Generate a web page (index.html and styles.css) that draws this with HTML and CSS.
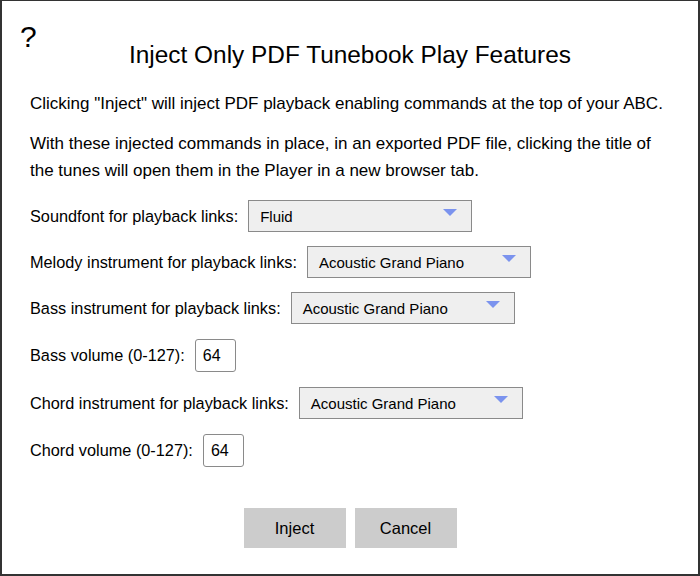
FILE: index.html
```html
<!DOCTYPE html>
<html>
<head>
<meta charset="utf-8">
<link rel="stylesheet" href="styles.css">
</head>
<body>
<div class="dialog">
  <a class="help">?</a>
  <h1 class="title">Inject Only PDF Tunebook Play Features</h1>
  <p class="text first">Clicking "Inject" will inject PDF playback enabling commands at the top of your ABC.</p>
  <p class="text">With these injected commands in place, in an exported PDF file, clicking the title of the tunes will open them in the Player in a new browser tab.</p>
  <div class="rows">
    <div class="row">
      <span class="label">Soundfont for playback links:</span>
      <div class="select"><span>Fluid</span><i class="arrow"></i></div>
    </div>
    <div class="row">
      <span class="label">Melody instrument for playback links:</span>
      <div class="select"><span>Acoustic Grand Piano</span><i class="arrow"></i></div>
    </div>
    <div class="row">
      <span class="label">Bass instrument for playback links:</span>
      <div class="select"><span>Acoustic Grand Piano</span><i class="arrow"></i></div>
    </div>
    <div class="row num-row">
      <span class="label">Bass volume (0-127):</span>
      <div class="num">64</div>
    </div>
    <div class="row">
      <span class="label">Chord instrument for playback links:</span>
      <div class="select"><span>Acoustic Grand Piano</span><i class="arrow"></i></div>
    </div>
    <div class="row num-row">
      <span class="label">Chord volume (0-127):</span>
      <div class="num">64</div>
    </div>
  </div>
  <div class="buttons">
    <button class="btn">Inject</button>
    <button class="btn">Cancel</button>
  </div>
</div>
</body>
</html>
```
FILE: styles.css
```css
html, body {
  margin: 0;
  padding: 0;
  background: #fff;
}
.dialog {
  position: relative;
  box-sizing: border-box;
  width: 700px;
  height: 576px;
  border: 2px solid #333;
  border-top-width: 1px;
  padding: 0 28px 0 28px;
  font-family: "Liberation Sans", Arial, sans-serif;
  color: #000;
}
.help {
  position: absolute;
  left: 18px;
  top: 19px;
  font-size: 30px;
  line-height: 34px;
}
.title {
  margin: 39px 0 0;
  font-size: 24.4px;
  font-weight: normal;
  line-height: 30px;
  text-align: center;
}
.text {
  margin: 0;
  font-size: 17px;
  line-height: 27px;
}
.text.first {
  margin-top: 20px;
  margin-bottom: 13px;
}
.rows {
  margin-top: 16px;
  display: flex;
  flex-direction: column;
  gap: 14px;
}
.row {
  display: flex;
  align-items: center;
  gap: 10px;
  font-size: 16.3px;
  height: 32px;
}
.row.num-row {
  height: 35px;
}
.select {
  position: relative;
  box-sizing: border-box;
  width: 224px;
  height: 32px;
  background: #efefef;
  border: 1px solid #8a8a8a;
  padding-left: 11px;
  display: flex;
  align-items: center;
  font-size: 15px;
}
.arrow {
  position: absolute;
  right: 14px;
  top: 8px;
  width: 0;
  height: 0;
  border-left: 7px solid transparent;
  border-right: 7px solid transparent;
  border-top: 7px solid #7b93ee;
}
.num {
  box-sizing: border-box;
  width: 41px;
  height: 33px;
  border: 1px solid #8a8a8a;
  border-radius: 3px;
  padding-left: 7px;
  display: flex;
  align-items: center;
  font-size: 16px;
}
.buttons {
  display: flex;
  justify-content: center;
  gap: 9px;
  margin-top: 40px;
}
.btn {
  width: 102px;
  height: 40px;
  border: 0;
  background: #cccccc;
  font-family: "Liberation Sans", Arial, sans-serif;
  font-size: 16.5px;
  color: #000;
  padding: 0;
}
```
